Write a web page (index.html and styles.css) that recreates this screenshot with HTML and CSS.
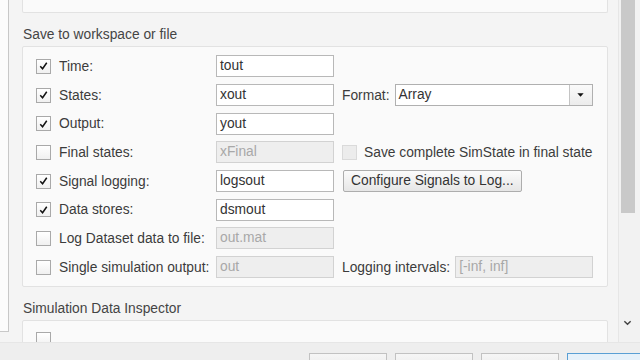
FILE: index.html
```html
<!DOCTYPE html>
<html>
<head>
<meta charset="utf-8">
<link rel="stylesheet" href="styles.css">
</head>
<body>
<div class="window">
  <div class="main">
    <div class="tree"></div>
    <div class="pane">
      <div class="content">
        <div class="group group-top">
          <div class="row">
            <span class="cb"></span>
            <span class="lbl wide"></span>
            <span class="field field-long"></span>
          </div>
        </div>

        <div class="section-title">Save to workspace or file</div>
        <div class="group">
          <div class="row">
            <span class="cb"><svg viewBox="0 0 14 14"><path d="M3.5 7.2 L6 10 L10.5 3.5" /></svg></span>
            <span class="lbl">Time:</span>
            <span class="field">tout</span>
          </div>
          <div class="row">
            <span class="cb"><svg viewBox="0 0 14 14"><path d="M3.5 7.2 L6 10 L10.5 3.5" /></svg></span>
            <span class="lbl">States:</span>
            <span class="field">xout</span>
            <span class="extra">
              <span class="lbl2">Format:</span>
              <span class="select"><span class="select-text">Array</span><span class="select-btn"><svg viewBox="0 0 10 6"><path d="M1.5 1 L8.5 1 L5 5 Z" /></svg></span></span>
            </span>
          </div>
          <div class="row">
            <span class="cb"><svg viewBox="0 0 14 14"><path d="M3.5 7.2 L6 10 L10.5 3.5" /></svg></span>
            <span class="lbl">Output:</span>
            <span class="field">yout</span>
          </div>
          <div class="row">
            <span class="cb"></span>
            <span class="lbl">Final states:</span>
            <span class="field disabled">xFinal</span>
            <span class="extra">
              <span class="cb cb-disabled"></span>
              <span class="lbl3">Save complete SimState in final state</span>
            </span>
          </div>
          <div class="row">
            <span class="cb"><svg viewBox="0 0 14 14"><path d="M3.5 7.2 L6 10 L10.5 3.5" /></svg></span>
            <span class="lbl">Signal logging:</span>
            <span class="field">logsout</span>
            <span class="extra">
              <span class="button">Configure Signals to Log...</span>
            </span>
          </div>
          <div class="row">
            <span class="cb"><svg viewBox="0 0 14 14"><path d="M3.5 7.2 L6 10 L10.5 3.5" /></svg></span>
            <span class="lbl">Data stores:</span>
            <span class="field">dsmout</span>
          </div>
          <div class="row">
            <span class="cb"></span>
            <span class="lbl">Log Dataset data to file:</span>
            <span class="field disabled">out.mat</span>
          </div>
          <div class="row">
            <span class="cb"></span>
            <span class="lbl">Single simulation output:</span>
            <span class="field disabled">out</span>
            <span class="extra">
              <span class="lbl2">Logging intervals:</span>
              <span class="field disabled field-int">[-inf, inf]</span>
            </span>
          </div>
        </div>

        <div class="section-title title-2">Simulation Data Inspector</div>
        <div class="group group-bottom">
          <div class="row">
            <span class="cb"></span>
          </div>
        </div>
      </div>
      <div class="scrollbar">
        <div class="thumb"></div>
        <div class="track"></div>
        <div class="arrow"><svg viewBox="0 0 10 6"><path d="M1.5 1 L5 4.5 L8.5 1" /></svg></div>
      </div>
    </div>
  </div>
  <div class="buttonbar">
    <span class="dbtn"></span>
    <span class="dbtn"></span>
    <span class="dbtn"></span>
    <span class="dbtn default"></span>
  </div>
</div>
</body>
</html>
```

FILE: styles.css
```css
html, body {
  margin: 0;
  padding: 0;
}
body {
  width: 640px;
  height: 360px;
  overflow: hidden;
  background: #f4f4f4;
  font-family: "Liberation Sans", Arial, sans-serif;
  font-size: 13.8px;
  color: #3c3c3c;
}
.window {
  display: flex;
  flex-direction: column;
  height: 360px;
}
.main {
  display: flex;
  height: 342px;
  flex: none;
}
.tree {
  width: 8px;
  height: 331px;
  background: #fcfcfc;
  border-right: 1px solid #c8c8c8;
  border-bottom: 1px solid #c8c8c8;
  flex: none;
}
.pane {
  flex: 1;
  display: flex;
  overflow: hidden;
}
.content {
  flex: 1;
  padding-left: 13px;
  padding-right: 10px;
  margin-top: -24px;
  overflow: hidden;
}
.group {
  background: #fafafa;
  border: 1px solid #e2e2e2;
  border-radius: 2px;
  padding: 5px 0 4px 13px;
}
.group-top {
  height: 32px;
  padding-top: 0;
  display: flex;
  align-items: flex-start;
  border-top: none;
}
.group-top .row {
  height: 22px;
  align-items: flex-end;
}
.group-top .cb {
  margin-bottom: 1px;
}
.lbl.wide {
  width: 76px;
}
.field-long {
  width: 343px !important;
}
.section-title {
  height: 18px;
  margin-top: 14px;
  margin-bottom: 1px;
  padding-left: 1px;
  line-height: 16px;
  color: #444;
}
.title-2 {
  margin-top: 14px;
}
.group-bottom {
  height: 30px;
}
.row {
  display: flex;
  align-items: center;
  height: 28.7px;
}
.cb {
  width: 13px;
  height: 13px;
  border: 1px solid #a9a9a9;
  background: linear-gradient(#ffffff, #f0f0f0);
  flex: none;
  display: flex;
  align-items: center;
  justify-content: center;
}
.cb svg {
  width: 14px;
  height: 14px;
  fill: none;
  stroke: #111;
  stroke-width: 1.6;
}
.cb-disabled {
  background: #ececec;
  border-color: #dadada;
}
.lbl {
  margin-left: 8px;
  width: 157px;
  white-space: nowrap;
  flex: none;
}
.field {
  width: 113px;
  height: 20px;
  border: 1px solid #b8b8b8;
  background: #fff;
  padding-left: 3px;
  line-height: 20px;
  color: #333;
  flex: none;
  white-space: nowrap;
}
.field.disabled {
  background: #eeeeee;
  border-color: #d2d2d2;
  color: #a8a8a8;
}
.extra {
  display: flex;
  align-items: center;
  margin-left: 8px;
}
.lbl2 {
  white-space: nowrap;
  margin-right: 5px;
}
.lbl3 {
  margin-left: 7px;
  white-space: nowrap;
}
.select {
  display: flex;
  width: 196px;
  height: 20px;
  border: 1px solid #b0b0b0;
  background: #fff;
}
.select-text {
  flex: 1;
  padding-left: 3px;
  line-height: 20px;
  color: #333;
}
.select-btn {
  width: 22px;
  border-left: 1px solid #c4c4c4;
  background: linear-gradient(#fafafa, #ececec);
  display: flex;
  align-items: center;
  justify-content: center;
}
.select-btn svg {
  width: 9px;
  height: 6px;
  fill: #111;
}
.field-int {
  width: 133px;
}
.button {
  display: inline-block;
  height: 20px;
  line-height: 20px;
  padding: 0 7px;
  width: 163px;
  border: 1px solid #adadad;
  border-radius: 2px;
  background: linear-gradient(#fbfbfb, #e6e6e6);
  color: #333;
  white-space: nowrap;
  margin-left: 1px;
}
.scrollbar {
  width: 21px;
  flex: none;
  display: flex;
  flex-direction: column;
  background: #f2f2f2;
  border-left: 1px solid #e6e6e6;
}
.thumb {
  margin-left: 2px;
  width: 14px;
  height: 213px;
  background: #c9c9c9;
}
.track {
  flex: 1;
}
.arrow {
  height: 22px;
  display: flex;
  justify-content: center;
  padding-right: 4px;
}
.arrow svg {
  width: 9px;
  height: 6px;
  fill: none;
  stroke: #444;
  stroke-width: 1.6;
}
.buttonbar {
  flex: 1;
  background: #eeeeee;
  border-top: 1px solid #e6e6e6;
  display: flex;
  align-items: flex-start;
  padding-top: 10px;
  padding-left: 309px;
  gap: 8px;
}
.dbtn {
  width: 76px;
  height: 20px;
  border: 1px solid #c2c2c2;
  background: linear-gradient(#f6f6f6, #e8e8e8);
  flex: none;
}
.dbtn.default {
  border-color: #5a9fd4;
  background: #e6f1fa;
}
```
